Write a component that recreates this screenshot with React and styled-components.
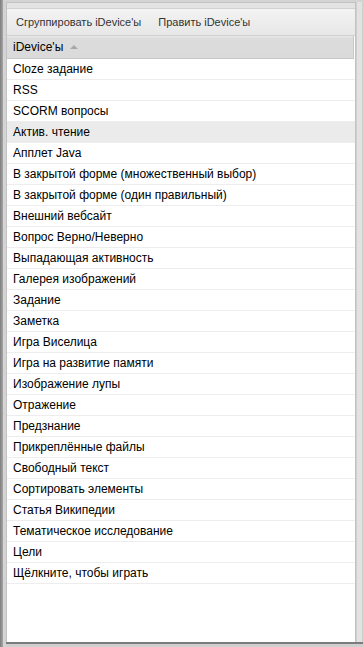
import styled, { createGlobalStyle } from 'styled-components'

const GlobalStyle = createGlobalStyle`
  html, body {
    margin: 0;
    padding: 0;
    background: #dcdcdc;
  }
  * {
    box-sizing: border-box;
  }
`

const Page = styled.div`
  display: flex;
  height: 647px;
  font-family: Tahoma, "Liberation Sans", Arial, sans-serif;
  font-size: 12px;
  color: #000;
`

const Rail = styled.div`
  width: 3px;
  background: linear-gradient(to right, #7e7e7e, #a6a6a6);
`

const Main = styled.div`
  flex: 1;
  display: flex;
  flex-direction: column;
  padding: 2px 0 0 3px;
  background: #d4d4d4;
`

const Body = styled.div`
  flex: 1;
  display: flex;
  border-bottom: 2px solid #7c7c7c;
`

const Frame = styled.div`
  flex: 1;
  display: flex;
  flex-direction: column;
  border: 1px solid #c2c2c2;
  border-bottom: none;
  background: #fff;
`

const SideStrip = styled.div`
  width: 7px;
  background: #e2e2e2;
  border-left: 1px solid #cfcfcf;
  border-right: 1px solid #cfcfcf;
`

const TopStrip = styled.div`
  height: 6px;
  background: #e3e3e3;
  border-bottom: 1px solid #d2d2d2;
`

const Toolbar = styled.div`
  height: 27px;
  display: flex;
  align-items: center;
  gap: 17px;
  padding-left: 9px;
  font-size: 11px;
  background: linear-gradient(#f3f3f3, #e7e7e7);
  border-bottom: 1px solid #d0d0d0;
`

const ToolButton = styled.span`
  color: #333;
`

const Header = styled.div`
  height: 23px;
  display: flex;
  align-items: center;
  gap: 7px;
  padding-left: 6px;
  margin-right: 1px;
  background: linear-gradient(#e6e6e6 0, #e6e6e6 1px, #dcdcdc 2px, #dadada);
  border-right: 1px solid #c8c8c8;
  border-bottom: 1px solid #c8c8c8;
`

const SortArrow = styled.span`
  width: 0;
  height: 0;
  margin-top: -1px;
  border-left: 4px solid transparent;
  border-right: 4px solid transparent;
  border-bottom: 4px solid #a8a8a8;
`

const List = styled.div`
  flex: 1;
  background: #fff;
`

const Row = styled.div`
  height: 21px;
  display: flex;
  align-items: center;
  padding-left: 6px;
  border-bottom: 1px solid #ededed;
  background: ${p => (p.$group ? '#ebebeb' : '#fff')};
`

const BottomStrip = styled.div`
  height: 3px;
  background: #cfcfcf;
`

const items = [
  'Cloze задание',
  'RSS',
  'SCORM вопросы',
  'Актив. чтение',
  'Апплет Java',
  'В закрытой форме (множественный выбор)',
  'В закрытой форме (один правильный)',
  'Внешний вебсайт',
  'Вопрос Верно/Неверно',
  'Выпадающая активность',
  'Галерея изображений',
  'Задание',
  'Заметка',
  'Игра Виселица',
  'Игра на развитие памяти',
  'Изображение лупы',
  'Отражение',
  'Предзнание',
  'Прикреплённые файлы',
  'Свободный текст',
  'Сортировать элементы',
  'Статья Википедии',
  'Тематическое исследование',
  'Цели',
  'Щёлкните, чтобы играть',
]

const App = () => {
  return (
    <>
      <GlobalStyle />
      <Page>
        <Rail />
        <Main>
          <Body>
            <Frame>
              <TopStrip />
              <Toolbar>
                <ToolButton>Сгруппировать iDevice'ы</ToolButton>
                <ToolButton>Править iDevice'ы</ToolButton>
              </Toolbar>
              <Header>
                iDevice'ы <SortArrow />
              </Header>
              <List>
                {items.map(item => (
                  <Row key={item} $group={item === 'Актив. чтение'}>
                    {item}
                  </Row>
                ))}
              </List>
            </Frame>
            <SideStrip />
          </Body>
          <BottomStrip />
        </Main>
      </Page>
    </>
  )
}

export default App
